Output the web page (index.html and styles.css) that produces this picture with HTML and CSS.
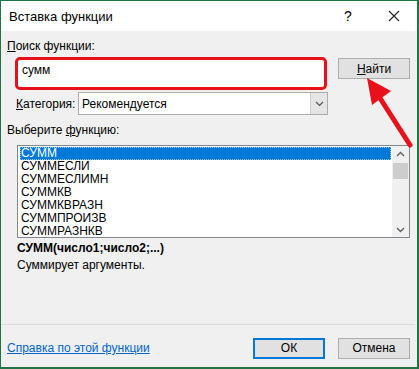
FILE: index.html
```html
<!DOCTYPE html>
<html lang="ru">
<head>
    <meta charset="UTF-8">
    <title>Вставка функции</title>
    <link rel="stylesheet" href="styles.css">
</head>
<body>
    <div class="dialog">
        <div class="titlebar">
            <span class="title">Вставка функции</span>
            <span class="title-btn help">?</span>
            <span class="title-btn close">
                <svg width="12" height="12" viewBox="0 0 12 12"><path d="M1 1 L11 11 M11 1 L1 11" stroke="#222" stroke-width="1.1" fill="none"/></svg>
            </span>
        </div>

        <div class="content">
            <div class="label"><u>П</u>оиск функции:</div>
            <div class="search-row">
                <div class="search-box">сумм</div>
                <button class="btn find"><u>Н</u>айти</button>
            </div>

            <div class="category-row">
                <span class="cat-label"><u>К</u>атегория:</span>
                <div class="select">
                    <span class="select-text">Рекомендуется</span>
                    <span class="select-arrow">
                        <svg width="9" height="6" viewBox="0 0 9 6"><path d="M1 1 L4.5 4.5 L8 1" stroke="#555" stroke-width="1.2" fill="none"/></svg>
                    </span>
                </div>
            </div>

            <div class="label choose">Выберите <u>ф</u>ункцию:</div>
            <div class="listbox">
                <div class="items">
                    <div class="item selected">СУММ</div>
                    <div class="item">СУММЕСЛИ</div>
                    <div class="item">СУММЕСЛИМН</div>
                    <div class="item">СУММКВ</div>
                    <div class="item">СУММКВРАЗН</div>
                    <div class="item">СУММПРОИЗВ</div>
                    <div class="item">СУММРАЗНКВ</div>
                </div>
                <div class="scrollbar">
                    <svg class="sb-arrow" width="9" height="6" viewBox="0 0 9 6"><path d="M1 5 L4.5 1.5 L8 5" stroke="#606060" stroke-width="1.4" fill="none"/></svg>
                    <div class="sb-thumb"></div>
                    <div class="sb-space"></div>
                    <svg class="sb-arrow" width="9" height="6" viewBox="0 0 9 6"><path d="M1 1 L4.5 4.5 L8 1" stroke="#606060" stroke-width="1.4" fill="none"/></svg>
                </div>
            </div>

            <div class="signature">СУММ(число1;число2;...)</div>
            <div class="description">Суммирует аргументы.</div>
        </div>

        <div class="separator"></div>

        <div class="footer">
            <a class="help-link" href="#">Справка по этой функции</a>
            <button class="btn ok">ОК</button>
            <button class="btn">Отмена</button>
        </div>

        <!-- red pointer drawn over the dialog -->
        <svg class="arrow" width="419" height="369" viewBox="0 0 419 369">
            <line x1="378" y1="95" x2="410" y2="145" stroke="#e8101a" stroke-width="5" stroke-linecap="round"/>
            <polygon points="367,78 391,91 372,105" fill="#e8101a"/>
        </svg>
    </div>
</body>
</html>
```

FILE: styles.css
```css
* { margin: 0; padding: 0; box-sizing: border-box; }
body {
    font-family: "Liberation Sans", Arial, sans-serif;
    font-size: 12px;
    color: #000;
    background: #fff;
}
.dialog {
    position: relative;
    width: 419px;
    height: 369px;
    background: #f0f0f0;
    border: 1px solid #217346;
    border-right-width: 2px;
    border-bottom-width: 2px;
    display: flex;
    flex-direction: column;
}
.titlebar {
    height: 30px;
    background: #fff;
    display: flex;
    align-items: center;
    padding-left: 8px;
}
.title {
    font-size: 13px;
    flex: 1;
}
.title-btn {
    width: 46px;
    text-align: center;
    font-size: 14px;
}
.help { margin-right: 0; }
.close svg { display: block; margin: 0 auto; }
.content {
    padding: 8px 7px 0 6px;
    flex: 1;
}
.label {
    line-height: 15px;
}
.search-row {
    display: flex;
    align-items: flex-start;
    margin-top: 3px;
}
.search-box {
    width: 312px;
    height: 33px;
    margin-left: 8px;
    border: 3px solid #e8101a;
    border-radius: 5px;
    background: #fff;
    padding: 4px 0 0 4px;
    line-height: 13px;
}
.btn {
    font-family: inherit;
    font-size: 12px;
    width: 72px;
    height: 21px;
    background: #e1e1e1;
    border: 1px solid #adadad;
    color: #000;
}
.find {
    margin-left: 11px;
    margin-top: 1px;
}
.category-row {
    display: flex;
    align-items: center;
    margin-top: 2px;
    height: 23px;
}
.cat-label {
    margin-left: 9px;
    width: 62px;
}
.select {
    width: 250px;
    height: 23px;
    background: #fff;
    border: 1px solid #acacac;
    display: flex;
    align-items: center;
}
.select-text {
    flex: 1;
    padding-left: 3px;
}
.select-arrow {
    width: 17px;
    height: 21px;
    background: #e5e5e5;
    border-left: 1px solid #cfcfcf;
    display: flex;
    align-items: center;
    justify-content: center;
}
.choose {
    margin-top: 8px;
}
.listbox {
    margin: 7px 0 0 10px;
    width: 393px;
    height: 93px;
    background: #fff;
    border: 1px solid #828790;
    display: flex;
}
.items {
    flex: 1;
    padding: 1px 1px 0 2px;
}
.item {
    height: 13px;
    line-height: 13px;
    padding-left: 1px;
}
.item.selected {
    background: #0078d7;
    color: #fff;
    outline: 1px dotted #9ac3ee;
    outline-offset: -1px;
}
.scrollbar {
    width: 17px;
    background: #f0f0f0;
    display: flex;
    flex-direction: column;
    align-items: center;
    padding: 5px 0 4px;
}
.sb-arrow { flex: none; }
.sb-thumb {
    width: 15px;
    height: 16px;
    background: #cdcdcd;
    margin-top: 6px;
}
.sb-space { flex: 1; }
.signature {
    font-weight: bold;
    margin: 3px 0 0 10px;
    line-height: 15px;
}
.description {
    margin: 2px 0 0 10px;
    line-height: 15px;
}
.separator {
    height: 1px;
    background: #dcdcdc;
    margin: 0 2px 0 0;
}
.footer {
    height: 42px;
    display: flex;
    align-items: center;
    padding: 4px 7px 0 6px;
    gap: 13px;
}
.help-link {
    color: #0066cc;
    flex: 1;
}
.ok {
    border: 2px solid #0078d7;
}
.arrow {
    position: absolute;
    left: -1px;
    top: -1px;
    pointer-events: none;
}
```
